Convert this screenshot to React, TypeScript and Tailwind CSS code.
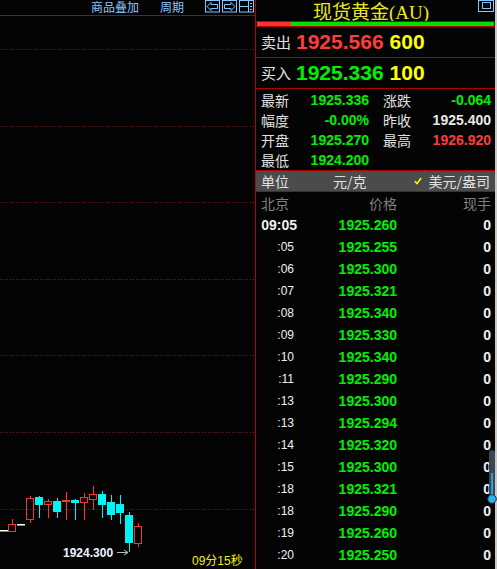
import React from "react";

const NUM = "font-['Liberation_Sans',Arial,sans-serif]";
const CJK = "font-['Noto_Sans_CJK_SC','Noto_Sans',sans-serif]";

const rows: [string, string][] = [
  ["09:05", "1925.260"],
  [":05", "1925.255"],
  [":06", "1925.300"],
  [":07", "1925.321"],
  [":08", "1925.340"],
  [":09", "1925.330"],
  [":10", "1925.340"],
  [":11", "1925.290"],
  [":13", "1925.300"],
  [":13", "1925.294"],
  [":14", "1925.320"],
  [":15", "1925.300"],
  [":18", "1925.321"],
  [":18", "1925.290"],
  [":19", "1925.260"],
  [":20", "1925.250"],
];

type Candle = { x: number; bt: number; bb: number; wt: number; wb: number; c: "r" | "c" | "w"; fill?: boolean };
const candles: Candle[] = [
  { x: 0, bt: 530, bb: 531, wt: 530, wb: 531, c: "w", fill: true },
  { x: 8, bt: 524, bb: 531, wt: 519, wb: 531, c: "r" },
  { x: 17, bt: 524, bb: 525, wt: 524, wb: 525, c: "w", fill: true },
  { x: 26, bt: 498, bb: 519, wt: 496, wb: 523, c: "r" },
  { x: 35, bt: 497, bb: 505, wt: 496, wb: 518, c: "c" },
  { x: 44, bt: 501, bb: 504, wt: 499, wb: 518, c: "r" },
  { x: 53, bt: 501, bb: 512, wt: 498, wb: 518, c: "c" },
  { x: 62, bt: 500, bb: 502, wt: 492, wb: 520, c: "r", fill: true },
  { x: 71, bt: 500, bb: 503, wt: 499, wb: 520, c: "c" },
  { x: 80, bt: 497, bb: 502, wt: 493, wb: 520, c: "r" },
  { x: 89, bt: 494, bb: 499, wt: 486, wb: 510, c: "r" },
  { x: 98, bt: 494, bb: 505, wt: 491, wb: 518, c: "c" },
  { x: 107, bt: 502, bb: 515, wt: 495, wb: 520, c: "c" },
  { x: 116, bt: 504, bb: 513, wt: 495, wb: 524, c: "c" },
  { x: 125, bt: 515, bb: 543, wt: 512, wb: 552, c: "c" },
  { x: 134, bt: 526, bb: 543, wt: 523, wb: 547, c: "r" },
];

const RED = "#ff3232";
const CYAN = "#00f4f4";

function Chart() {
  const grid = [49.5, 126.5, 202.5, 279.5, 355.5, 432.5, 509.5];
  return (
    <svg width={255} height={553} viewBox="0 16 255 553" className="block">
      {grid.map((y) => (
        <line key={y} x1={1} x2={254} y1={y} y2={y} stroke="#8a1010" strokeWidth={1} strokeDasharray="1 2" />
      ))}
      {candles.map((k, i) => {
        const col = k.c === "r" ? RED : k.c === "c" ? CYAN : "#ffffff";
        const cx = k.x + 4;
        if (k.c === "c" || k.fill) {
          return (
            <g key={i}>
              <line x1={cx + 0.5} x2={cx + 0.5} y1={k.wt} y2={k.wb} stroke={col} strokeWidth={1} />
              <rect x={k.x} y={k.bt} width={8} height={Math.max(1.5, k.bb - k.bt)} fill={col} />
            </g>
          );
        }
        return (
          <g key={i}>
            <line x1={cx + 0.5} x2={cx + 0.5} y1={k.wt} y2={k.bt} stroke={col} strokeWidth={1} />
            <line x1={cx + 0.5} x2={cx + 0.5} y1={k.bb} y2={k.wb} stroke={col} strokeWidth={1} />
            <rect x={k.x + 0.5} y={k.bt + 0.5} width={7} height={k.bb - k.bt} fill="none" stroke={col} strokeWidth={1} />
          </g>
        );
      })}
      <line x1={117} x2={128} y1={552.5} y2={552.5} stroke="#b8b8b8" strokeWidth={1} />
      <path d="M124 550 L128 552.5 L124 555" fill="none" stroke="#b8b8b8" strokeWidth={1} />
    </svg>
  );
}

function IconBox({ kind }: { kind: "l" | "r" | "s" }) {
  const c = "#86c4ff";
  return (
    <svg width={15} height={13} viewBox="0 0 15 13" className="block">
      <rect x={0.5} y={0.5} width={14} height={11.5} fill="none" stroke={c} strokeWidth={1} />
      {kind === "l" && <path d="M2 6.5 L6 2.5 L6 4.5 L12.5 4.5 L12.5 8.5 L6 8.5 L6 10.5 Z" fill="none" stroke={c} strokeWidth={1} />}
      {kind === "r" && <path d="M13 6.5 L9 2.5 L9 4.5 L2.5 4.5 L2.5 8.5 L9 8.5 L9 10.5 Z" fill="none" stroke={c} strokeWidth={1} />}
      {kind === "s" && (
        <g stroke={c} strokeWidth={1}>
          <line x1={1} x2={9} y1={6.5} y2={6.5} />
          <line x1={9.5} x2={9.5} y1={1} y2={12} />
          <line x1={11} x2={13} y1={3.5} y2={3.5} />
          <line x1={11} x2={13} y1={6.5} y2={6.5} />
          <line x1={11} x2={13} y1={9.5} y2={9.5} />
        </g>
      )}
    </svg>
  );
}

function StatRow({ a, av, ac, b, bv, bc }: { a: string; av: string; ac: string; b?: string; bv?: string; bc?: string }) {
  return (
    <div className="flex h-[20px] items-center pl-[5px] pr-[4px]">
      <div className="flex w-[108px] items-center justify-between">
        <span className={`${CJK} text-[14px] leading-[20px] text-[#e0e0e0]`}>{a}</span>
        <span className={`${NUM} text-[14px] font-bold leading-[20px]`} style={{ color: ac }}>{av}</span>
      </div>
      <div className="ml-[14px] flex flex-1 items-center justify-between">
        <span className={`${CJK} text-[14px] leading-[20px] text-[#e0e0e0]`}>{b ?? ""}</span>
        <span className={`${NUM} text-[14px] font-bold leading-[20px]`} style={{ color: bc }}>{bv ?? ""}</span>
      </div>
    </div>
  );
}

export default function App() {
  const GREEN = "#00f000";
  return (
    <div className="flex h-[569px] w-[497px] overflow-hidden bg-[#040404]">
      {/* Left chart panel */}
      <div className="relative flex w-[256px] flex-col border-r border-[#b00000]">
        <div className="flex h-[16px] items-start border-b border-[#b00000]">
          <span className={`${CJK} ml-[91px] text-[12px] leading-[13px] text-[#86c4ff]`}>商品叠加</span>
          <span className={`${CJK} ml-[21px] text-[12px] leading-[13px] text-[#86c4ff]`}>周期</span>
          <div className="ml-[21px] flex gap-[2px]">
            <IconBox kind="l" />
            <IconBox kind="r" />
            <IconBox kind="s" />
          </div>
        </div>
        <div className="flex-1">
          <Chart />
        </div>
        <span className={`${NUM} absolute left-[63px] top-[546px] text-[12px] font-bold leading-[14px] text-[#eef4ff]`}>1924.300</span>
        <span className={`font-['Liberation_Sans','Noto_Sans_CJK_SC',sans-serif] absolute left-[192px] top-[554px] text-[12px] leading-[14px] text-[#f0f000]`}>09分15秒</span>
      </div>

      {/* Right quote panel */}
      <div className="relative flex w-[239px] flex-col">
        <div className="flex h-[21px] items-start">
          <span className="ml-[57px] font-['Noto_Sans_CJK_SC',sans-serif] text-[19px] leading-[21px] text-[#e8e820]">
            现货黄金<span className="font-['Liberation_Serif',serif]">(AU)</span>
          </span>
          <svg width={16} height={12} viewBox="0 0 16 12" className="ml-auto mr-[1px] block">
            <rect x={0.5} y={0.5} width={15} height={11} fill="none" stroke="#86c4ff" strokeWidth={1} />
            <rect x={4.5} y={2.5} width={8} height={6} fill="none" stroke="#86c4ff" strokeWidth={1} />
          </svg>
        </div>
        <div className="flex h-[6px] border-y border-[#b00000] px-[1px]">
          <div className="h-[4px] w-[34px] bg-[#ff3232]" />
          <div className="h-[4px] flex-1 bg-[#00e000]" />
        </div>
        <div className="flex h-[31px] items-center border-b border-[#b00000] pl-[5px]">
          <span className={`${CJK} text-[15px] leading-[20px] text-[#e0e0e0]`}>卖出</span>
          <span className={`${NUM} ml-[5px] text-[21px] font-bold leading-[24px] text-[#ff3c3c]`}>1925.566</span>
          <span className={`${NUM} ml-[6px] text-[21px] font-bold leading-[24px] text-[#ffff00]`}>600</span>
        </div>
        <div className="flex h-[31px] items-center border-b border-[#b00000] pl-[5px]">
          <span className={`${CJK} text-[15px] leading-[20px] text-[#e0e0e0]`}>买入</span>
          <span className={`${NUM} ml-[5px] text-[21px] font-bold leading-[24px] text-[#00f000]`}>1925.336</span>
          <span className={`${NUM} ml-[6px] text-[21px] font-bold leading-[24px] text-[#ffff00]`}>100</span>
        </div>
        <div className="flex h-[82px] flex-col border-b border-[#b00000] pt-[1px]">
          <StatRow a="最新" av="1925.336" ac={GREEN} b="涨跌" bv="-0.064" bc={GREEN} />
          <StatRow a="幅度" av="-0.00%" ac={GREEN} b="昨收" bv="1925.400" bc="#e8e8e8" />
          <StatRow a="开盘" av="1925.270" ac={GREEN} b="最高" bv="1926.920" bc="#ff3c3c" />
          <StatRow a="最低" av="1924.200" ac={GREEN} />
        </div>
        <div className="flex h-[21px] items-center border-b border-[#b00000] bg-[#4b4b4b] pr-[5px]">
          <span className={`${CJK} w-[77px] pl-[5px] text-[14px] leading-[20px] text-[#e0e0e0]`}>单位</span>
          <span className={`${CJK} text-[14px] leading-[20px] text-[#e0e0e0]`}>元/克</span>
          <svg width={8} height={8} viewBox="0 0 8 8" className="ml-auto mr-[7px] block">
            <path d="M0.8 4.2 L3 6.6 L7.2 1" fill="none" stroke="#ffff00" strokeWidth={1.5} />
          </svg>
          <span className={`${CJK} text-[14px] leading-[20px] text-[#e0e0e0]`}>美元/盎司</span>
        </div>
        <div className="flex h-[22px] items-center">
          <span className={`${CJK} w-[41px] pl-[5px] text-[14px] leading-[20px] text-[#808080]`}>北京</span>
          <span className={`${CJK} w-[100px] text-right text-[14px] leading-[20px] text-[#808080]`}>价格</span>
          <span className={`${CJK} flex-1 pr-[4px] text-right text-[14px] leading-[20px] text-[#808080]`}>现手</span>
        </div>
        <div className="flex flex-col">
          {rows.map(([t, p], i) => (
            <div key={i} className="flex h-[22px] items-center">
              {i === 0 ? (
                <span className={`${NUM} w-[41px] text-right text-[14px] font-bold leading-[16px] text-[#f0f0f0]`}>{t}</span>
              ) : (
                <span className={`${NUM} w-[41px] pr-[3px] text-right text-[12px] leading-[16px] text-[#f0f0f0]`}>{t}</span>
              )}
              <span className={`${NUM} w-[100px] text-right text-[14px] font-bold leading-[16px] text-[#00f000]`}>{p}</span>
              <span className={`${NUM} flex-1 pr-[4px] text-right text-[14px] font-bold leading-[16px] text-[#f0f0f0]`}>0</span>
            </div>
          ))}
        </div>
        <svg width={11} height={58} viewBox="0 0 11 58" className="absolute left-[230px] top-[448px] block">
          <rect x={3} y={2} width={6} height={50} rx={3} fill="#3a4652" />
          <rect x={5.2} y={25} width={1.8} height={26} fill="#2aa8e6" />
          <circle cx={6} cy={51} r={4.3} fill="#2eb2ee" stroke="#25333f" strokeWidth={1} />
        </svg>
      </div>
      <div className="h-full w-[2px] bg-[#c8c8c8]" />
    </div>
  );
}
